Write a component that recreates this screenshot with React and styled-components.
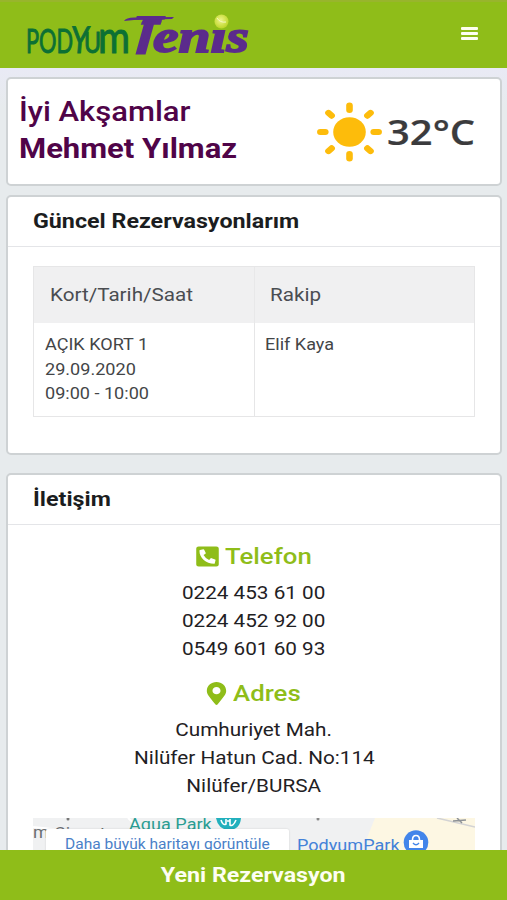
import React from "react";
import styled, {createGlobalStyle} from "styled-components";
import {FaPhoneSquareAlt, FaMapMarkerAlt} from "react-icons/fa";

const GlobalStyle = createGlobalStyle`
  * {
    box-sizing: border-box;
  }

  body {
    margin: 0;
    overflow: hidden;
    background: #e7ebed;
    font-family: Roboto, sans-serif;
    color: #212529;
  }

  h1, h2, h3, p {
    margin: 0;
    font-weight: inherit;
  }
`;

const Page = styled.div`
  display: flex;
  flex-direction: column;
  width: 507px;
  height: 900px;
  overflow: hidden;
`;

const Header = styled.header`
  display: flex;
  justify-content: space-between;
  flex: 0 0 68px;
  padding-right: 29px;
  background: #8fbd19;
  border-top: 2px solid #98b52c;
`;

const MenuButton = styled.button`
  display: flex;
  flex-direction: column;
  align-self: flex-start;
  gap: 2px;
  width: 17px;
  margin-top: 24.5px;
  padding: 0;
  border: none;
  background: none;

  > span {
    height: 3px;
    border-radius: 1px;
    background: #fdfff0;
  }
`;

const Content = styled.main`
  flex: 1;
  min-height: 0;
  overflow: hidden;
  padding: 9px 5px 0 6px;
  background: linear-gradient(#e9eaf5, #e7ebed 40px);
`;

const Card = styled.section`
  height: ${p => p.$height}px;
  margin-bottom: ${p => p.$gap || 0}px;
  border: 2px solid #ced2d4;
  border-radius: 5px;
  background: #fff;
`;

const CardTitle = styled.h2`
  height: 50px;
  padding-left: 25px;
  border-bottom: 1px solid #e4e5e8;
  font-size: 20.8px;
  font-weight: 700;
  line-height: 48px;
  color: #1b1d20;
`;

// Roboto drawn a little wider than its natural width
const Wide = styled.span`
  display: inline-block;
  white-space: nowrap;
  transform: scaleX(${p => p.$scale || 1.11});
  transform-origin: ${p => p.$origin || "left"} center;
`;

const Greeting = styled.div`
  display: flex;
  justify-content: space-between;
  padding: 14px 24px 0 11px;
`;

const Hello = styled.h1`
  font-size: 27.8px;
  line-height: 37px;
  font-weight: ${p => (p.$strong ? 700 : 500)};
  color: #500448;
`;

const Weather = styled.div`
  display: flex;
  align-items: center;
  height: 77px;
  width: 159px;

  > svg {
    flex: none;
    margin-right: 5px;
  }
`;

const Degree = styled.div`
  font-family: "Open Sans", sans-serif;
  font-size: 35px;
  font-weight: 600;
  line-height: 40px;
  color: #3b3b3d;
  -webkit-text-stroke: .2px #3b3b3d;
`;

const Table = styled.div`
  display: grid;
  grid-template-columns: 220px 220px;
  grid-template-rows: 56px 93px;
  width: 442px;
  margin: 19px 0 0 25px;
  border: 1px solid #e6e6e7;
`;

const HeadCell = styled.div`
  padding-left: ${p => p.$left}px;
  background: #f0f0f1;
  border-left: ${p => (p.$divider ? "1px solid #e8e8e9" : "none")};
  font-size: 18.6px;
  line-height: 57px;
  color: #4a4d51;
`;

const Cell = styled.div`
  padding: 10px 0 0 ${p => p.$left}px;
  border-left: ${p => (p.$divider ? "1px solid #e6e6e7" : "none")};
  font-size: 16.3px;
  line-height: 24.5px;
  color: #434547;
`;

const Contact = styled.div`
  display: flex;
  flex-direction: column;
  align-items: center;
  padding-top: 15px;
`;

const ContactTitle = styled.h3`
  display: flex;
  align-items: center;
  height: 32px;
  gap: ${p => p.$gap}px;
  margin: ${p => p.$top || 0}px 6px 8px 0;
  font-size: 22.8px;
  font-weight: 500;
  color: #8fbd19;

  > svg {
    transform: scaleX(1.12);
  }
`;

const Line = styled.p`
  font-size: 18.67px;
  line-height: 27.8px;
  color: #1f2124;
`;

const Map = styled.div`
  position: relative;
  width: 442px;
  height: 200px;
  margin-top: 17px;
  overflow: hidden;
  background: #f0f1f2;
`;

const MapLabel = styled.span`
  position: absolute;
  left: ${p => p.$x}px;
  top: ${p => p.$y}px;
  font-size: ${p => p.$size || 16.3}px;
  line-height: 20px;
  color: ${p => p.$color};
`;

const MapLink = styled.a`
  position: absolute;
  left: 13px;
  top: 11px;
  width: 243px;
  height: 44px;
  padding-left: 19px;
  border-radius: 2px;
  background: #fff;
  box-shadow: 0 0 2px rgba(0, 0, 0, .15);
  font-size: 14px;
  line-height: 31px;
  color: #4a7fc8;
`;

const Footer = styled.button`
  flex: 0 0 50px;
  padding: 0;
  border: none;
  background: #8fbd19;
  font: 700 20.9px/49px Roboto, sans-serif;
  color: #fdfef2;
`;

const phones = ["0224 453 61 00", "0224 452 92 00", "0549 601 60 93"];
const address = ["Cumhuriyet Mah.", "Nilüfer Hatun Cad. No:114", "Nilüfer/BURSA"];
const reservation = ["AÇIK KORT 1", "29.09.2020", "09:00 - 10:00"];

const Logo = () => (
    <svg width="260" height="64" viewBox="0 2 260 64">
        <defs>
            <radialGradient id="ball" cx="45%" cy="40%" r="60%">
                <stop offset="0" stopColor="#eef48a"/>
                <stop offset="1" stopColor="#bcd626"/>
            </radialGradient>
            <clipPath id="stem">
                <path d="M120 10H180V19.500H162L151 60H126L143 19.500H120Z"/>
            </clipPath>
        </defs>
        <g fill="#0c7034" stroke="#0c7034" strokeWidth="1" fontFamily="Lato">
            <text x="26" y="53" fontSize="33.500" textLength="47" lengthAdjust="spacingAndGlyphs">POD</text>
            <text transform="translate(70 53) skewX(-5)" fontSize="37" textLength="18" lengthAdjust="spacingAndGlyphs">Y</text>
            <text x="84" y="53" fontSize="29" textLength="17" lengthAdjust="spacingAndGlyphs">U</text>
            <text x="98" y="53" fontSize="45" textLength="32" lengthAdjust="spacingAndGlyphs">m</text>
        </g>
        <g fill="#5b2b8c" stroke="#5b2b8c">
            <g clipPath="url(#stem)">
                <text
                    transform="translate(129 53) skewX(-9)"
                    fontFamily="Lato"
                    fontWeight="900"
                    fontStyle="italic"
                    fontSize="49"
                    strokeWidth="3"
                >
                    T
                </text>
            </g>
            <text
                x="153"
                y="52"
                fontFamily="Liberation Serif"
                fontWeight="700"
                fontStyle="italic"
                fontSize="47"
                strokeWidth="1.8"
                textLength="96"
                lengthAdjust="spacingAndGlyphs"
            >
                enis
            </text>
        </g>
        <path d="M124 21Q126 17.500 134 17.500L174 17L172 19L134 20Z" fill="#5b2b8c"/>
        <circle cx="221.5" cy="21.5" r="7" fill="url(#ball)"/>
        <path d="M217 18Q220 23 226 22" fill="none" stroke="#f6f8c4" strokeWidth="1"/>
    </svg>
);

const Sun = () => (
    <svg width="65" height="60" viewBox="-32.5 -30 65 60">
        <ellipse rx="16.3" ry="14.8" fill="#fdbc0b"/>
        <g transform="scale(1.1 1)" stroke="#fdbc0b" strokeWidth="6" strokeLinecap="round">
            {[0, 45, 90, 135, 180, 225, 270, 315].map(a => (
                <path key={a} d={a % 90 ? "M23 0H27" : "M22 0H26.5"} transform={`rotate(${a})`}/>
            ))}
        </g>
    </svg>
);

const MapArt = () => (
    <svg width="442" height="200">
        <path d="M342 0H442V50H356L334 20Z" fill="#fdf7e3"/>
        <path d="M404 0L442 9" stroke="#d3d3d4" strokeWidth="1.5"/>
        <path d="M420 3L433 2M424 0L429 5" stroke="#8d9196" strokeWidth="1.5"/>
        <path d="M0 9L30 12M95 0L104 8" stroke="#fff" strokeWidth="2"/>
        <circle cx="35" cy="1" r="1.5" fill="#777"/>
        <circle cx="285" cy="1" r="1.5" fill="#888"/>
        <path d="M183 0H208Q207 12 195.500 12Q185 11 183 0Z" fill="#22b0bd"/>
        <path d="M188 2Q190 8 193 6V1M197 1V7Q200 9 203 2M194 3H197" fill="none" stroke="#fff" strokeWidth="1.6"/>
    </svg>
);

const ShopPin = styled.svg`
  position: absolute;
  left: 370px;
  top: 12px;
`;

export default function App() {
    return (
        <Page>
            <GlobalStyle/>
            <Header>
                <Logo/>
                <MenuButton aria-label="Menü">
                    <span/>
                    <span/>
                    <span/>
                </MenuButton>
            </Header>

            <Content>
                <Card $height={109} $gap={9}>
                    <Greeting>
                        <div>
                            <Hello><Wide $scale={1.115}>İyi Akşamlar</Wide></Hello>
                            <Hello $strong><Wide $scale={1.115}>Mehmet Yılmaz</Wide></Hello>
                        </div>
                        <Weather>
                            <Sun/>
                            <Degree><Wide $scale={1.14}>32°C</Wide></Degree>
                        </Weather>
                    </Greeting>
                </Card>

                <Card $height={260} $gap={18}>
                    <CardTitle><Wide $scale={1.118}>Güncel Rezervasyonlarım</Wide></CardTitle>
                    <Table>
                        <HeadCell $left={16}><Wide>Kort/Tarih/Saat</Wide></HeadCell>
                        <HeadCell $left={15} $divider><Wide>Rakip</Wide></HeadCell>
                        <Cell $left={11}>
                            {reservation.map(r => (
                                <div key={r}><Wide>{r}</Wide></div>
                            ))}
                        </Cell>
                        <Cell $left={10} $divider><Wide>Elif Kaya</Wide></Cell>
                    </Table>
                </Card>

                <Card $height={560}>
                    <CardTitle><Wide $scale={1.118}>İletişim</Wide></CardTitle>
                    <Contact>
                        <ContactTitle $gap={11}>
                            <FaPhoneSquareAlt size={23}/>
                            <Wide $origin="center" $scale={1.13}>Telefon</Wide>
                        </ContactTitle>
                        {phones.map(p => (
                            <Line key={p}><Wide $origin="center">{p}</Wide></Line>
                        ))}
                        <ContactTitle $gap={9} $top={14}>
                            <FaMapMarkerAlt size={23}/>
                            <Wide $origin="center" $scale={1.13}>Adres</Wide>
                        </ContactTitle>
                        {address.map(a => (
                            <Line key={a}><Wide $origin="center">{a}</Wide></Line>
                        ))}
                        <Map>
                            <MapArt/>
                            <MapLabel $x={0} $y={5} $color="#6b6f73"><Wide>m</Wide></MapLabel>
                            <MapLabel $x={21} $y={6} $color="#6b6f73"><Wide>Cinnet</Wide></MapLabel>
                            <MapLabel $x={96} $y={-3} $color="#2b9d92"><Wide>Aqua Park</Wide></MapLabel>
                            <MapLabel $x={264} $y={18} $color="#4482d8"><Wide>PodyumPark</Wide></MapLabel>
                            <MapLink><Wide>Daha büyük haritayı görüntüle</Wide></MapLink>
                            <ShopPin width="26" height="26" viewBox="0 0 26 26">
                                <circle cx="13" cy="12.500" r="12.300" fill="#4285ea"/>
                                <path d="M6 10H20V18H6Z" fill="#fff"/>
                                <path d="M9.500 10Q9.500 5.500 13 5.500T16.500 10" fill="none" stroke="#fff" strokeWidth="1.6"/>
                                <path d="M10 13Q13 16.500 16 13" fill="none" stroke="#4285ea" strokeWidth="1.4"/>
                            </ShopPin>
                        </Map>
                    </Contact>
                </Card>
            </Content>

            <Footer><Wide $origin="center">Yeni Rezervasyon</Wide></Footer>
        </Page>
    );
}
